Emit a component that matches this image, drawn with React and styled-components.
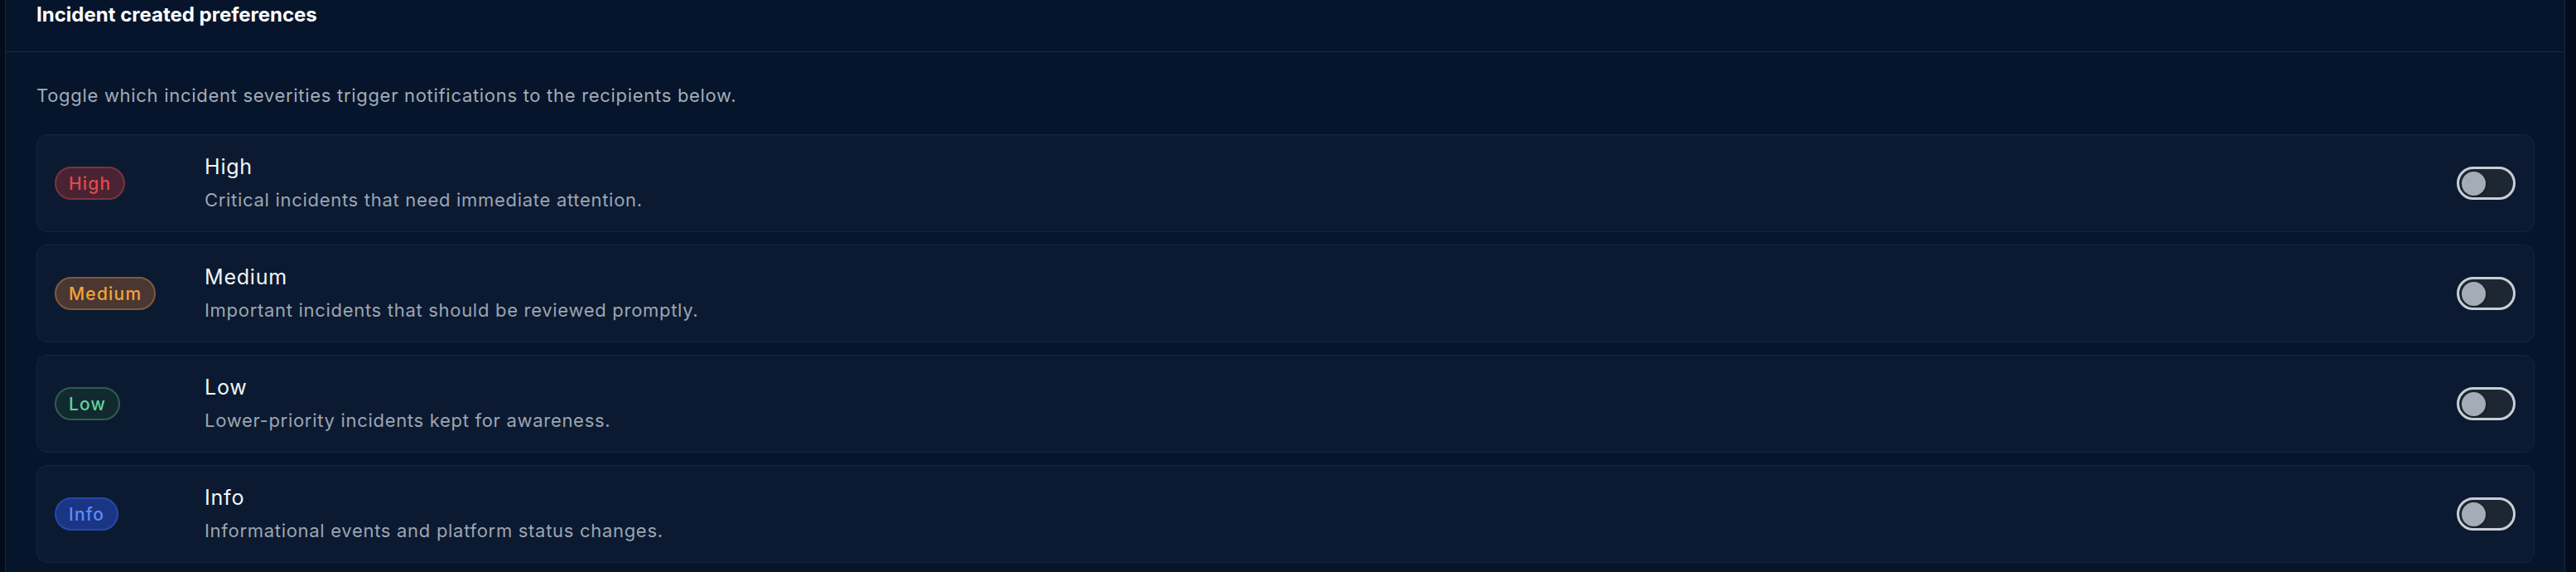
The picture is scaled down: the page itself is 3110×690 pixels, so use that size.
import React, { useState } from 'react';
import styled, { createGlobalStyle } from 'styled-components';

const GlobalStyle = createGlobalStyle`
  html, body {
    margin: 0;
    padding: 0;
    background: #030c1a;
  }
  body {
    font-family: Inter, "Noto Sans", "Liberation Sans", sans-serif;
    -webkit-font-smoothing: antialiased;
  }
  * { box-sizing: border-box; }
`;

const severities = [
  { key: 'high', label: 'High', title: 'High', desc: 'Critical incidents that need immediate attention.' },
  { key: 'medium', label: 'Medium', title: 'Medium', desc: 'Important incidents that should be reviewed promptly.' },
  { key: 'low', label: 'Low', title: 'Low', desc: 'Lower-priority incidents kept for awareness.' },
  { key: 'info', label: 'Info', title: 'Info', desc: 'Informational events and platform status changes.' },
];

const tones = {
  high: { bg: '#4a2332', border: '#7a343c', color: '#e5484f' },
  medium: { bg: '#4b3731', border: '#7e5a3a', color: '#f0a43a' },
  low: { bg: '#112a2f', border: '#2b5f4c', color: '#5fd49b' },
  info: { bg: '#1b3585', border: '#2747a8', color: '#5b8ef4' },
};

const Page = styled.div`
  padding: 0 13px 0 6px;
  height: 690px;
  overflow: hidden;
`;

const Panel = styled.section`
  background: #06152b;
  border-left: 1px solid #17263c;
  border-right: 1px solid #17263c;
  min-height: 690px;
`;

const PanelHeader = styled.header`
  padding: 2px 36px 28px 37px;
  border-bottom: 1px solid #1a2a41;
`;

const PanelTitle = styled.h2`
  margin: 0;
  font-size: 24px;
  line-height: 32px;
  font-weight: 700;
  color: #ffffff;
`;

const PanelBody = styled.div`
  padding: 36px 36px 0 37px;
`;

const Intro = styled.p`
  margin: 0 0 31px;
  font-size: 22px;
  line-height: 32px;
  color: #a3abb6;
  letter-spacing: 0.7px;
`;

const List = styled.div`
  display: flex;
  flex-direction: column;
  gap: 15px;
`;

const Card = styled.div`
  display: flex;
  align-items: center;
  height: 118px;
  padding: 0 22px 0 21px;
  background: #0b1a31;
  border: 1px solid #16263c;
  border-radius: 13px;
`;

const BadgeCell = styled.div`
  width: 181px;
  flex-shrink: 0;
  display: flex;
  align-items: center;
`;

const Badge = styled.span`
  display: inline-flex;
  align-items: center;
  height: 40px;
  padding: 0 15px;
  border-radius: 20px;
  border: 2px solid ${(p) => tones[p.tone].border};
  background: ${(p) => tones[p.tone].bg};
  color: ${(p) => tones[p.tone].color};
  font-size: 21px;
  font-weight: 500;
  letter-spacing: 1.2px;
`;

const Text = styled.div`
  flex: 1;
  min-width: 0;
`;

const RowTitle = styled.div`
  font-size: 25px;
  line-height: 32px;
  font-weight: 400;
  color: #f2f5f8;
  letter-spacing: 0.8px;
`;

const RowDesc = styled.div`
  margin-top: 8px;
  font-size: 22px;
  line-height: 32px;
  color: #9ca5b1;
  letter-spacing: 0.7px;
`;

const Switch = styled.button`
  position: relative;
  flex-shrink: 0;
  width: 71px;
  height: 40px;
  padding: 0;
  border-radius: 20px;
  border: 3px solid #c9ced5;
  background: ${(p) => (p.on ? '#2f6fe0' : '#1c2733')};
  cursor: pointer;
`;

const Knob = styled.span`
  position: absolute;
  top: 3px;
  left: ${(p) => (p.on ? '35px' : '3px')};
  width: 29px;
  height: 29px;
  border-radius: 50%;
  background: #a4acb5;
  box-shadow: 1px 1px 3px rgba(0, 0, 0, 0.35);
`;

const App = () => {
  const [enabled, setEnabled] = useState({ high: false, medium: false, low: false, info: false });

  const toggle = (key) => setEnabled((s) => ({ ...s, [key]: !s[key] }));

  return (
    <>
      <GlobalStyle />
      <Page>
        <Panel>
          <PanelHeader>
            <PanelTitle>Incident created preferences</PanelTitle>
          </PanelHeader>
          <PanelBody>
            <Intro>Toggle which incident severities trigger notifications to the recipients below.</Intro>
            <List>
              {severities.map((s) => (
                <Card key={s.key}>
                  <BadgeCell>
                    <Badge tone={s.key}>{s.label}</Badge>
                  </BadgeCell>
                  <Text>
                    <RowTitle>{s.title}</RowTitle>
                    <RowDesc>{s.desc}</RowDesc>
                  </Text>
                  <Switch
                    type="button"
                    role="switch"
                    aria-checked={enabled[s.key]}
                    on={enabled[s.key] ? 1 : 0}
                    onClick={() => toggle(s.key)}
                  >
                    <Knob on={enabled[s.key] ? 1 : 0} />
                  </Switch>
                </Card>
              ))}
            </List>
          </PanelBody>
        </Panel>
      </Page>
    </>
  );
};

export default App;
